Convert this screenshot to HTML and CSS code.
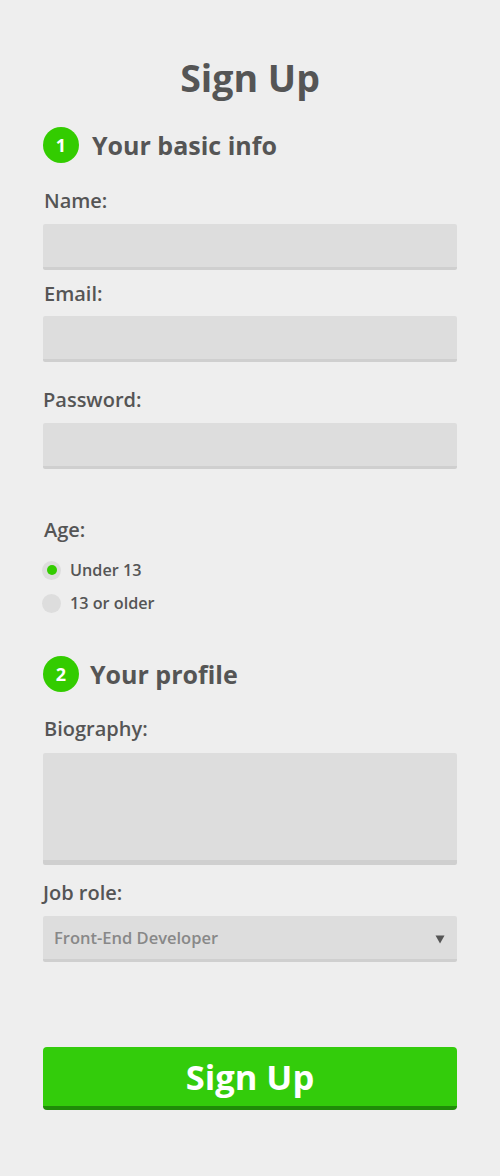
FILE: index.html
```html
<!DOCTYPE html>
<html lang="en">
<head>
<meta charset="utf-8">
<title>Sign Up</title>
<link rel="stylesheet" href="styles.css">
</head>
<body>
<form class="form">
  <h1 class="title">Sign Up</h1>

  <div class="step step-first">
    <span class="step-num">1</span>
    <span class="step-text step-text-1">Your basic info</span>
  </div>

  <label class="label label-name" for="name">Name:</label>
  <input class="field" id="name" type="text">

  <label class="label label-email" for="email">Email:</label>
  <input class="field" id="email" type="email">

  <label class="label label-password" for="password">Password:</label>
  <input class="field" id="password" type="password">

  <div class="label label-age">Age:</div>
  <div class="radios">
    <label class="radio-row"><input class="radio" type="radio" name="age" checked><span>Under 13</span></label>
    <label class="radio-row"><input class="radio" type="radio" name="age"><span>13 or older</span></label>
  </div>

  <div class="step step-second">
    <span class="step-num">2</span>
    <span class="step-text step-text-2">Your profile</span>
  </div>

  <label class="label label-bio" for="bio">Biography:</label>
  <textarea class="field area" id="bio"></textarea>

  <label class="label label-job" for="job">Job role:</label>
  <div class="select-wrap">
    <select class="field select" id="job">
      <option>Front-End Developer</option>
    </select>
    <svg class="arrow" width="10" height="9" viewBox="0 0 10 9"><path d="M0.5 0.5 H9.5 L5 8.5 Z" fill="#555"/></svg>
  </div>

  <button class="submit" type="button">Sign Up</button>
</form>
</body>
</html>
```
FILE: styles.css
```css
* { box-sizing: border-box; }
html, body { margin: 0; padding: 0; }
body {
  background: #eeeeee;
  font-family: "Open Sans", "Noto Sans", sans-serif;
  color: #555555;
  width: 500px;
  height: 1176px;
}
.form {
  display: flex;
  flex-direction: column;
  padding: 0 43px;
}
.title {
  margin: 56px 0 0;
  font-size: 37.5px;
  line-height: 44px;
  font-weight: 700;
  text-align: center;
  color: #555555;
}
.step {
  display: flex;
  align-items: center;
  height: 36px;
}
.step-first { margin-top: 27px; }
.step-second { margin-top: 41px; }
.step-num {
  width: 36px;
  height: 36px;
  border-radius: 50%;
  background: #33cc00;
  color: #ffffff;
  font-weight: 700;
  font-size: 18px;
  line-height: 36px;
  text-align: center;
}
.step-text {
  font-size: 25px;
  line-height: 36px;
  font-weight: 700;
  color: #555555;
}
.step-text-1 { margin-left: 13px; }
.step-text-2 { margin-left: 11px; }
.label {
  display: block;
  font-size: 20px;
  line-height: 24px;
  font-weight: 600;
  color: #555555;
  padding-left: 1px;
}
.label-name { margin: 26px 0 11px; }
.label-email { margin: 12px 0 10px; }
.label-password { margin: 26px 0 11px; padding-left: 0; }
.label-age { margin: 49px 0 16px; }
.label-bio { margin: 25px 0 12px; }
.label-job { margin: 16px 0 11px; padding-left: 0; }
.field {
  display: block;
  width: 100%;
  height: 46px;
  margin: 0;
  border: none;
  border-bottom: 3px solid #cfcfcf;
  border-radius: 2px;
  background: #dddddd;
  outline: none;
  font-family: inherit;
  font-size: 16px;
  padding: 0 11px;
  color: #555555;
  -webkit-appearance: none;
  appearance: none;
}
.area {
  height: 112px;
  border-bottom-width: 5px;
  resize: none;
}
.radios {
  display: flex;
  flex-direction: column;
  gap: 9px;
}
.radio-row {
  display: flex;
  align-items: center;
  height: 24px;
  font-size: 16.2px;
  line-height: 24px;
  font-weight: 600;
  color: #555555;
}
.radio {
  -webkit-appearance: none;
  appearance: none;
  width: 19px;
  height: 19px;
  margin: 0 9px 0 -1px;
  border-radius: 50%;
  background: #dddddd;
  display: grid;
  place-items: center;
}
.radio:checked::before {
  content: "";
  width: 10px;
  height: 10px;
  border-radius: 50%;
  background: #33cc00;
}
.select-wrap {
  position: relative;
}
.select {
  font-size: 16.5px;
  font-weight: 600;
  color: #888888;
  line-height: 43px;
}
.arrow {
  position: absolute;
  right: 12px;
  top: 19px;
}
.submit {
  margin-top: 85px;
  height: 63px;
  width: 100%;
  border: none;
  border-bottom: 4px solid #1f8c08;
  border-radius: 4px;
  background: #33cc0b;
  color: #ffffff;
  font-family: inherit;
  font-size: 34.5px;
  font-weight: 700;
  line-height: 59px;
  padding: 0;
}
```
